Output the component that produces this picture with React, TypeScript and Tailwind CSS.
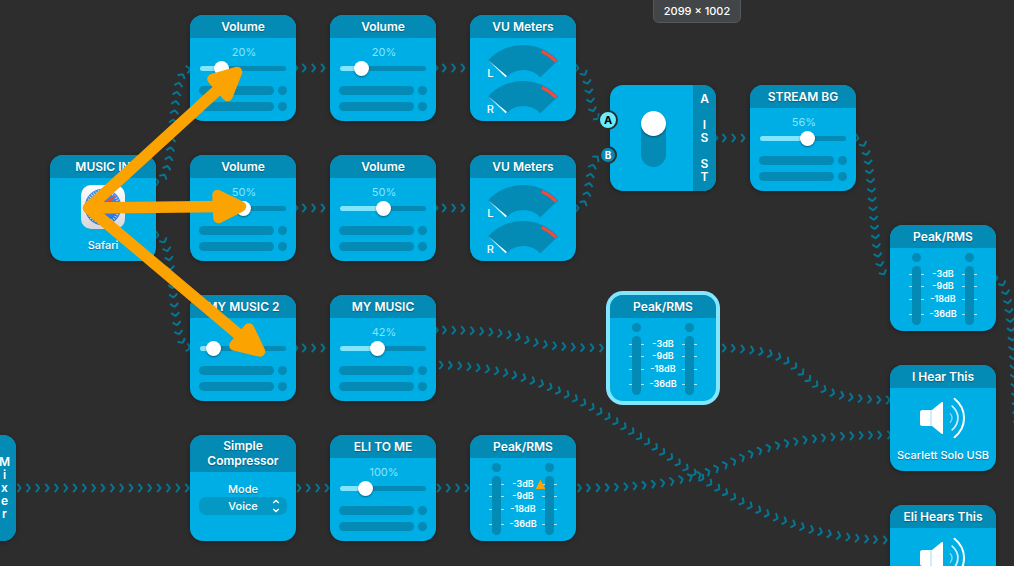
import React, { useId, useState } from "react";

type Point = [number, number];

interface Wire {
  from: Point;
  to: Point;
  phase?: number;
}

const STEP = 9.33;
const MAX_REACH = 195;

const wires: Wire[] = [
  { from: [156, 182], to: [190, 69], phase: 1 },
  { from: [156, 208], to: [190, 208], phase: 1 },
  { from: [156, 235], to: [190, 348], phase: 1 },
  { from: [296, 68], to: [330, 68], phase: -1 },
  { from: [296, 208], to: [330, 208], phase: -1 },
  { from: [296, 348], to: [330, 348], phase: -1 },
  { from: [296, 488], to: [330, 488], phase: 3 },
  { from: [436, 68], to: [470, 68], phase: -1 },
  { from: [436, 208], to: [470, 208], phase: -1 },
  { from: [436, 488], to: [470, 488], phase: 3 },
  { from: [436, 330], to: [610, 348], phase: -1 },
  { from: [436, 365], to: [890, 540], phase: 5 },
  { from: [576, 68], to: [603, 120], phase: 1 },
  { from: [576, 208], to: [603, 155], phase: 1 },
  { from: [576, 488], to: [890, 435], phase: 3 },
  { from: [716, 138], to: [750, 138], phase: -1 },
  { from: [716, 348], to: [890, 400], phase: 8 },
  { from: [856, 138], to: [890, 278], phase: 1 },
  { from: [996, 278], to: [1034, 488], phase: 0 },
  { from: [16, 488], to: [190, 488], phase: 3 },
];

// Walks an S-shaped curve and returns evenly spaced positions with a heading.
function walk({ from, to, phase = 0 }: Wire) {
  const [x1, y1] = from;
  const [x2, y2] = to;
  const reach = Math.min((x2 - x1) * 0.68, MAX_REACH);
  const at = (t: number): Point => {
    const u = 1 - t;
    const a = u * u * u;
    const b = 3 * u * u * t;
    const c = 3 * u * t * t;
    const d = t * t * t;
    return [
      a * x1 + b * (x1 + reach) + c * (x2 - reach) + d * x2,
      (a + b) * y1 + (c + d) * y2,
    ];
  };
  const marks: { x: number; y: number; angle: number }[] = [];
  let [px, py] = at(0);
  let travelled = 0;
  let next = phase;
  for (let i = 1; i <= 1000; i++) {
    const [x, y] = at(i / 1000);
    travelled += Math.hypot(x - px, y - py);
    if (travelled >= next) {
      marks.push({ x, y, angle: (Math.atan2(y - py, x - px) * 180) / Math.PI });
      next += STEP;
    }
    px = x;
    py = y;
  }
  return marks;
}

function Wires() {
  return (
    <svg className="absolute left-0 top-0 h-[566px] w-[1040px]" aria-hidden="true">
      {wires.map((wire, i) => (
        <g key={i} fill="none" stroke="#057794" strokeWidth="2" strokeLinejoin="round">
          {walk(wire).map((m, j) => (
            <path
              key={j}
              d="M-2 -4 Q-0.2 -2.6 1.4 0 Q-0.2 2.6 -2 4"
              transform={`translate(${m.x.toFixed(1)} ${m.y.toFixed(1)}) rotate(${m.angle.toFixed(0)})`}
            />
          ))}
        </g>
      ))}
    </svg>
  );
}

interface NodeProps {
  at: string;
  title: string;
  selected?: boolean;
  children?: React.ReactNode;
}

function Node({ at, title, selected, children }: NodeProps) {
  return (
    <section
      className={`absolute ${at} flex h-[106px] w-[106px] flex-col overflow-hidden rounded-[13px] bg-[#00aee6] ${
        selected ? "shadow-[0_0_0_4px_#82e6ff]" : "shadow-[0_1px_5px_rgba(0,0,0,0.3)]"
      }`}
    >
      <h2 className="flex min-h-[23px] shrink-0 items-center justify-center bg-[#038ab5] px-2 pb-1 pt-[3px] text-center text-[12px] font-semibold leading-[15px] text-white text-shadow-[0_1px_1px_rgba(0,0,0,0.3)]">
        {title}
      </h2>
      {children}
    </section>
  );
}

function LevelRow() {
  return (
    <div className="flex gap-1">
      <span className="h-[9px] flex-1 rounded-full bg-[#038ab5]" />
      <span className="h-[9px] w-[9px] rounded-full bg-[#038ab5]" />
    </div>
  );
}

interface VolumeProps {
  at: string;
  title?: string;
  label?: string;
  level: number;
}

function VolumeNode({ at, title = "Volume", label = "", level }: VolumeProps) {
  const [value, setValue] = useState(level);
  return (
    <Node at={at} title={title}>
      <div className="flex flex-col px-[9px] pt-1.5">
        <output className="h-4 pl-0.5 text-center text-[11px] leading-4 text-[#86e4fa]">{label}</output>
        <input
          type="range"
          min={0}
          max={100}
          value={value}
          aria-label={`${title} level`}
          onChange={(e) => setValue(Number(e.target.value))}
          style={{
            background: `linear-gradient(to right, #82e6ff ${value}%, #038ab5 ${value}%)`,
          }}
          className="mx-px mb-[15px] mt-[6px] h-[5px] w-auto appearance-none rounded-full [&::-webkit-slider-runnable-track]:h-[5px] [&::-webkit-slider-thumb]:-mt-[5px] [&::-webkit-slider-thumb]:h-[15px] [&::-webkit-slider-thumb]:w-[15px] [&::-webkit-slider-thumb]:appearance-none [&::-webkit-slider-thumb]:rounded-full [&::-webkit-slider-thumb]:bg-white [&::-webkit-slider-thumb]:shadow-[0_1px_2px_rgba(0,0,0,0.45)]"
        />
        <div className="flex flex-col gap-[7px]">
          <LevelRow />
          <LevelRow />
        </div>
      </div>
    </Node>
  );
}

function Gauge({ y, label }: { y: number; label: string }) {
  return (
    <g transform={`translate(0 ${y})`}>
      <path d="M18 22.5 A47.3 47.3 0 0 1 88 22.5 L70.3 39.3 A23 23 0 0 0 36.5 39.3 Z" fill="#038ab5" />
      <path d="M71.8 13.4 A45.3 45.3 0 0 1 86 23.4" fill="none" stroke="#f9483a" strokeWidth="3" />
      <path d="M18.2 22.2 L37 38 L35.6 39.3 Z" fill="#fff" />
      <text x="20.3" y="39" textAnchor="middle" fontSize="11" fontWeight="500" fill="#fff">
        {label}
      </text>
    </g>
  );
}

function VuNode({ at }: { at: string }) {
  return (
    <Node at={at} title="VU Meters">
      <svg viewBox="0 0 106 83" className="h-[83px] w-full">
        <Gauge y={0} label="L" />
        <Gauge y={36} label="R" />
      </svg>
    </Node>
  );
}

const scale: [string, number][] = [
  ["-3dB", 26],
  ["-9dB", 38],
  ["-18dB", 51],
  ["-36dB", 66],
];

function PeakNode({ at, selected, marker }: { at: string; selected?: boolean; marker?: boolean }) {
  return (
    <Node at={at} title="Peak/RMS" selected={selected}>
      <svg viewBox="0 0 106 83" className="h-[83px] w-full">
        {scale.map(([label, y]) => (
          <g key={label}>
            <path d={`M19 ${y + 0.5}H34M72 ${y + 0.5}H87`} stroke="#a5e8fa" strokeWidth="1" />
            <text x="53" y={y + 3.3} textAnchor="middle" fontSize="9" fontWeight="600" fill="#fff">
              {label}
            </text>
          </g>
        ))}
        {[26.5, 79.5].map((x) => (
          <g key={x}>
            <circle cx={x} cy="9.5" r="4.5" fill="#038ab5" />
            <rect x={x - 4.5} y="18" width="9" height="59" rx="4.5" fill="#038ab5" />
          </g>
        ))}
        {marker && <path d="M70.5 21.5 L75.3 31 H65.7 Z" fill="#fba300" />}
      </svg>
    </Node>
  );
}

function OutputNode({ at, title, device }: { at: string; title: string; device: string }) {
  return (
    <Node at={at} title={title}>
      <svg viewBox="0 0 106 60" className="h-[60px] w-full">
        <path d="M32.5 22 H42 V38 H32.5 Q30 38 30 35.5 V24.5 Q30 22 32.5 22 Z" fill="#fff" />
        <rect x="40" y="22" width="2" height="16" fill="#cdeffb" />
        <path d="M42 22 L51.5 14.3 Q53 13.2 53 15 V45 Q53 46.8 51.5 45.7 L42 38 Z" fill="#fff" />
        <g fill="none" stroke="#fff" strokeLinecap="round">
          <path d="M64.5 10.8 C77.2 21 77.2 39 64.5 49.2" strokeWidth="2" />
          <path d="M62.2 18.2 C69.8 25 69.8 35 62.2 41.8" strokeWidth="1.8" opacity="0.8" />
          <path d="M60.3 25.6 C62.6 28.5 62.6 31.5 60.3 34.4" strokeWidth="1.3" opacity="0.55" />
        </g>
      </svg>
      <p className="whitespace-nowrap text-center text-[11px] font-medium leading-[14px] text-white text-shadow-[0_1px_1px_rgba(0,0,0,0.3)]">
        {device}
      </p>
    </Node>
  );
}

function SafariIcon() {
  const id = useId();
  return (
    <svg viewBox="0 0 44 44" className="h-11 w-11" role="img" aria-label="Safari icon">
      <defs>
        <linearGradient id={`${id}p`} x1="0" y1="0" x2="0" y2="1">
          <stop offset="0" stopColor="#ffffff" />
          <stop offset="1" stopColor="#d6d6da" />
        </linearGradient>
        <linearGradient id={`${id}b`} x1="0" y1="0" x2="0" y2="1">
          <stop offset="0" stopColor="#3a93e8" />
          <stop offset="1" stopColor="#2f6fd0" />
        </linearGradient>
      </defs>
      <rect width="44" height="44" rx="10" fill={`url(#${id}p)`} />
      <circle cx="22" cy="22" r="18.3" fill={`url(#${id}b)`} />
      <circle
        cx="22"
        cy="22"
        r="16"
        fill="none"
        stroke="#e4f1ff"
        strokeWidth="2.6"
        strokeDasharray="0.8 1.7"
      />
      <path d="M35.5 9.5 L24.3 24.4 L19.7 19.6 Z" fill="#f0453c" />
      <path d="M8.5 34.5 L19.7 19.6 L24.3 24.4 Z" fill="#f4f4f6" />
    </svg>
  );
}

function Letters({ text }: { text: string }) {
  return (
    <h2 className="flex w-[23px] flex-col items-center justify-center bg-[#038ab5] pb-0.5 text-[12px] font-semibold leading-[13px] text-white">
      {text.split("").map((ch, i) => (
        <span key={i} className="h-[13px]">
          {ch}
        </span>
      ))}
    </h2>
  );
}

function SwitchNode() {
  const [onB, setOnB] = useState(false);
  return (
    <section className="absolute left-[610px] top-[85px] h-[106px] w-[106px]">
      <div className="flex h-full overflow-hidden rounded-[13px] bg-[#00aee6] shadow-[0_1px_5px_rgba(0,0,0,0.3)]">
        <div className="flex flex-1 items-center justify-center pl-1 pt-0.5">
          <button
            type="button"
            role="switch"
            aria-checked={onB}
            aria-label="A/B source"
            onClick={() => setOnB(!onB)}
            className={`flex h-14 w-[25px] flex-col rounded-full bg-[#038ab5] ${onB ? "justify-end" : "justify-start"}`}
          >
            <span className="h-[25px] w-[25px] rounded-full bg-white shadow-[0_1px_2px_rgba(0,0,0,0.4)]" />
          </button>
        </div>
        <Letters text="A IS ST" />
      </div>
      <span className="absolute -left-3 top-[25px] flex h-5 w-5 items-center justify-center rounded-full border-2 border-[#2d2d2d] bg-[#68edff] text-[11px] font-bold leading-none text-black">
        A
      </span>
      <span className="absolute -left-[11px] top-[61px] flex h-[18px] w-[18px] items-center justify-center rounded-full border-2 border-[#2d2d2d] bg-[#038ab5] text-[10px] font-bold leading-none text-white">
        B
      </span>
    </section>
  );
}

function Arrows() {
  return (
    <svg className="pointer-events-none absolute left-0 top-0 h-[566px] w-[300px]" aria-hidden="true">
      <g fill="#fba300" stroke="#fba300" strokeLinecap="round" strokeLinejoin="round">
        <path d="M88.5 208 L222 86 M88.5 208 L222 206.5 M88.5 208 L244 339" fill="none" strokeWidth="11.5" />
        <path
          d="M237 72 L212.500 79 L227.500 96 Z M241 206.500 L217.500 195 L218.500 218 Z M260 351.500 L249 328.500 L234.500 345.500 Z"
          strokeWidth="10.5"
        />
      </g>
    </svg>
  );
}

export default function App() {
  return (
    <main className="relative min-h-screen overflow-hidden bg-[#2d2d2d] font-['Inter',sans-serif]">
      <Wires />

      <section className="absolute -left-[90px] top-[435px] flex h-[106px] w-[106px] justify-end overflow-hidden rounded-[13px] bg-[#00aee6] shadow-[0_1px_5px_rgba(0,0,0,0.3)]">
        <Letters text="Mixer" />
      </section>

      <Node at="left-[50px] top-[155px]" title="MUSIC IN">
        <div className="flex flex-col items-center pt-[7px]">
          <SafariIcon />
          <p className="mt-[9px] text-[11px] font-medium leading-[14px] text-white text-shadow-[0_1px_1px_rgba(0,0,0,0.3)]">
            Safari
          </p>
        </div>
      </Node>

      <VolumeNode at="left-[190px] top-[15px]" label="20%" level={20} />
      <VolumeNode at="left-[190px] top-[155px]" label="50%" level={50} />
      <VolumeNode at="left-[190px] top-[295px]" title="MY MUSIC 2" level={8} />

      <Node at="left-[190px] top-[435px]" title="Simple Compressor">
        <div className="flex flex-col px-[9px] pt-[9px] text-[11px] font-medium text-white">
          <label htmlFor="mode" className="text-center leading-4 text-shadow-[0_1px_1px_rgba(0,0,0,0.3)]">
            Mode
          </label>
          <div className="grid items-center">
            <select
              id="mode"
              defaultValue="Voice"
              className="col-start-1 row-start-1 h-[18px] w-full appearance-none rounded-[7px] bg-[#0499c4] text-center leading-[18px] text-white"
            >
              <option>Voice</option>
              <option>Music</option>
            </select>
            <svg
              viewBox="0 0 8 14"
              className="pointer-events-none col-start-1 row-start-1 mr-[7px] h-3.5 w-2 justify-self-end"
              fill="none"
              stroke="#fff"
              strokeWidth="1.4"
              aria-hidden="true"
            >
              <path d="M1.200 4 L4 1.500 L6.800 4 M1.200 10 L4 12.500 L6.800 10" />
            </svg>
          </div>
        </div>
      </Node>

      <VolumeNode at="left-[330px] top-[15px]" label="20%" level={20} />
      <VolumeNode at="left-[330px] top-[155px]" label="50%" level={50} />
      <VolumeNode at="left-[330px] top-[295px]" title="MY MUSIC" label="42%" level={42} />
      <VolumeNode at="left-[330px] top-[435px]" title="ELI TO ME" label="100%" level={25} />

      <VuNode at="left-[470px] top-[15px]" />
      <VuNode at="left-[470px] top-[155px]" />
      <PeakNode at="left-[470px] top-[435px]" marker />

      <SwitchNode />
      <PeakNode at="left-[610px] top-[295px]" selected />

      <VolumeNode at="left-[750px] top-[85px]" title="STREAM BG" label="56%" level={56} />

      <PeakNode at="left-[890px] top-[225px]" />
      <OutputNode at="left-[890px] top-[365px]" title="I Hear This" device="Scarlett Solo USB" />
      <OutputNode at="left-[890px] top-[505px]" title="Eli Hears This" device="" />

      <Arrows />

      <div className="absolute -top-1 left-[653px] flex h-[27px] w-[88px] items-center justify-center whitespace-nowrap rounded-[6px] border border-[#55595c] bg-[#424649] pt-1 text-[11px] font-medium text-white">
        2099 × 1002
      </div>
    </main>
  );
}
